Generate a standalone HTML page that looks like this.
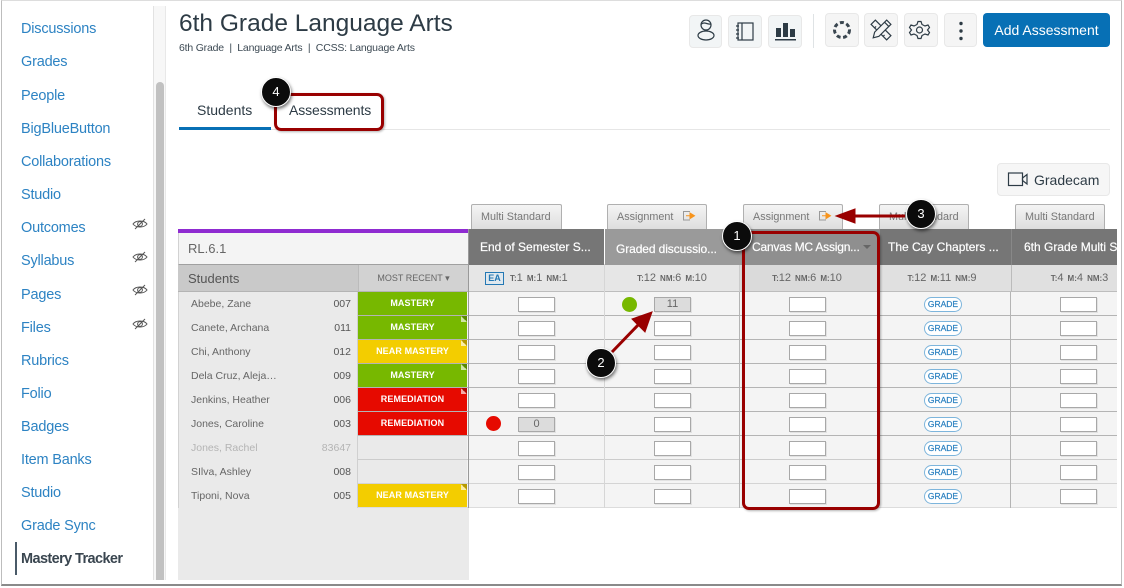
<!DOCTYPE html>
<html><head><meta charset="utf-8"><style>
html,body{margin:0;padding:0;background:#fff}
body{width:1124px;height:588px;position:relative;overflow:hidden;font-family:"Liberation Sans",sans-serif}
div,span,a{position:absolute;white-space:nowrap;box-sizing:border-box}
#win{left:1px;top:0;width:1121px;height:586px;border:1px solid #bdbdbd;border-bottom:2px solid #8a8a8a;border-top:1px solid #ddd;background:#fff}
.n{left:21px;font-size:14.5px;color:#2d83c3;line-height:20px;letter-spacing:-.2px}
.btn{background:#f5f5f5;border:1px solid #e8e8e8;border-radius:4px}
.tb{background:linear-gradient(#f4f4f4,#dedede);border:1px solid #b0b0b0;border-bottom:0;border-radius:2px 2px 0 0;top:204px;height:25px;font-size:10.8px;color:#777;line-height:24px;text-align:left;padding-left:9px}
.hd{top:229px;height:36px;background:#767676;color:#fff;font-size:12px;line-height:37px;padding-left:11px;overflow:hidden;-webkit-text-stroke:.2px #fff}
.sh{top:265px;height:27px;background:#e6e6e6;border-bottom:1px solid #bdbdbd;font-size:11px;color:#666;line-height:26px;text-align:center;word-spacing:1px}
.sh b{font-size:8px}
.r{left:178px;width:939px;height:24px;background:#f4f4f4;border-bottom:1px solid #b4b4b4}
.nm{left:0;width:180px;height:24px;background:#eaeaea;font-size:10.5px;color:#666;line-height:24px;padding-left:13px}
.id{left:132px;width:41px;text-align:right;font-size:10.5px;color:#555;line-height:24px}
.m{left:180px;width:109px;height:23px;color:#fff;font-size:9px;font-weight:bold;text-align:center;line-height:23px;letter-spacing:.1px}
.g{background:#77b800}.y{background:#f3cd00}.d{background:#e60a00}.e{background:#eaeaea}
.i{top:5px;width:37px;height:15px;background:#fff;border:1px solid #a8a8a8;box-shadow:1px 1px 0 #e2e2e2}
.c1{left:340px}.c2{left:476px}.c3{left:611px}.c5{left:882px}
.p{left:746px;top:5px;width:38px;height:15px;border:1px solid #7db5dc;border-radius:8px;background:#fff;color:#2a80c0;font-size:8.5px;line-height:13px;text-align:center;-webkit-text-stroke:.2px #2a80c0}
.tr{top:0;width:6px;height:6px;left:283px;background:linear-gradient(45deg,rgba(255,255,255,.65) 50%,rgba(0,0,0,.25) 50%)}
.v{width:1px;background:#c4c4c4}
.o{width:30px;height:30px;border-radius:50%;background:#0b0b0b;border:1px solid #fff;box-shadow:1px 2px 3px rgba(0,0,0,.55);color:#fff;font-size:13px;line-height:28px;text-align:center}
</style></head><body>
<div id="win"></div>

<!-- sidebar -->
<div style="left:153px;top:6px;width:13px;height:574px;background:#f7f7f7;border-left:1px solid #e2e2e2;border-right:1px solid #e8e8e8"></div>
<div style="left:156px;top:82px;width:8px;height:498px;background:#c1c1c1;border-radius:4px 4px 0 0"></div>
<a class="n" style="top:19px">Discussions</a>
<a class="n" style="top:52px">Grades</a>
<a class="n" style="top:86px">People</a>
<a class="n" style="top:119px">BigBlueButton</a>
<a class="n" style="top:152px">Collaborations</a>
<a class="n" style="top:185px">Studio</a>
<a class="n" style="top:218px">Outcomes</a>
<a class="n" style="top:251px">Syllabus</a>
<a class="n" style="top:285px">Pages</a>
<a class="n" style="top:318px">Files</a>
<a class="n" style="top:351px">Rubrics</a>
<a class="n" style="top:384px">Folio</a>
<a class="n" style="top:417px">Badges</a>
<a class="n" style="top:450px">Item Banks</a>
<a class="n" style="top:483px">Studio</a>
<a class="n" style="top:516px">Grade Sync</a>
<a class="n" style="top:549px;color:#3a4650;font-weight:bold;letter-spacing:-.6px">Mastery Tracker</a>
<div style="left:15px;top:542px;width:2px;height:33px;background:#4a5a68"></div>
<svg style="position:absolute;left:132px;top:217px" width="16" height="120" fill="none" stroke="#555" stroke-width="1">
<g><path d="M1 7C4 3 12 3 15 7C12 11 4 11 1 7Z"/><circle cx="8" cy="7" r="2.4"/><path d="M3 12L13 2"/></g>
<g transform="translate(0,33)"><path d="M1 7C4 3 12 3 15 7C12 11 4 11 1 7Z"/><circle cx="8" cy="7" r="2.4"/><path d="M3 12L13 2"/></g>
<g transform="translate(0,66)"><path d="M1 7C4 3 12 3 15 7C12 11 4 11 1 7Z"/><circle cx="8" cy="7" r="2.4"/><path d="M3 12L13 2"/></g>
<g transform="translate(0,100)"><path d="M1 7C4 3 12 3 15 7C12 11 4 11 1 7Z"/><circle cx="8" cy="7" r="2.4"/><path d="M3 12L13 2"/></g>
</svg>

<!-- header -->
<div style="left:179px;top:8px;font-size:24.5px;line-height:32px;color:#2d3b45">6th Grade Language Arts</div>
<div style="left:179px;top:41px;font-size:10.5px;line-height:14px;color:#3d4a54;letter-spacing:-.2px">6th Grade &nbsp;|&nbsp; Language Arts &nbsp;|&nbsp; CCSS: Language Arts</div>

<div class="btn" style="left:689px;top:15px;width:33px;height:33px;background:#f2f5f6"></div>
<div class="btn" style="left:728px;top:15px;width:34px;height:33px;background:#f2f5f6"></div>
<div class="btn" style="left:768px;top:15px;width:34px;height:33px;background:#f2f5f6"></div>
<div style="left:813px;top:14px;width:1px;height:34px;background:#dfe3e5"></div>
<div class="btn" style="left:825px;top:13px;width:34px;height:34px"></div>
<div class="btn" style="left:864px;top:13px;width:34px;height:34px"></div>
<div class="btn" style="left:904px;top:13px;width:34px;height:34px"></div>
<div class="btn" style="left:944px;top:13px;width:33px;height:34px"></div>
<svg style="position:absolute;left:689px;top:13px" width="290" height="36" fill="none" stroke="#2d3b45" stroke-width="1.2">
<!-- person -->
<ellipse cx="17" cy="22.5" rx="8" ry="4.5"/><circle cx="17" cy="12" r="5"/><path d="M12 11.5C15 8 19 12 22 11"/>
<!-- notebook -->
<rect x="49" y="10" width="15" height="17"/><path d="M53 10V27M47 13h3M47 17h3M47 21h3M47 25h3"/>
<!-- chart -->
<g fill="#2d3b45" stroke="none"><rect x="87" y="15" width="5" height="9"/><rect x="94" y="10" width="5" height="14"/><rect x="101" y="16" width="5" height="8"/><rect x="86" y="26" width="21" height="1.5"/></g>
<!-- canvas dots -->
<circle cx="153" cy="17" r="7.5" stroke="#3a4650" stroke-width="3" stroke-dasharray="4 2.6"/>
<!-- pencil ruler -->
<g stroke-width="1.2"><g transform="rotate(-45 192 17)"><rect x="189" y="6" width="6" height="22"/><path d="M189 11h2M189 15h2M189 19h2M189 23h2"/></g><g transform="rotate(45 192 17)" fill="#f5f5f5"><path d="M189 6h6v17l-3 5l-3-5Z"/><path d="M189 9h6"/></g></g>
<!-- gear -->
<path d="M229 8.500L232 8.500L233 11.500L236 13L239 12L240.500 14.500L238.500 17L240.500 19.500L239 22L236 21L233 22.500L232 25.500L229 25.500L228 22.500L225 21L222 22L220.500 19.500L222.500 17L220.500 14.500L222 12L225 13L228 11.500Z"/><circle cx="230.500" cy="17" r="3"/>
<!-- kebab -->
<g fill="#2d3b45" stroke="none"><circle cx="272" cy="10.500" r="1.700"/><circle cx="272" cy="18" r="1.700"/><circle cx="272" cy="25.500" r="1.700"/></g>
</svg>
<div style="left:983px;top:13px;width:127px;height:34px;background:#0770b5;border-radius:4px;color:#fff;font-size:14px;line-height:34px;text-align:center">Add Assessment</div>

<!-- tabs -->
<div style="left:179px;top:129px;width:931px;height:1px;background:#e6e6e6"></div>
<div style="left:179px;top:127px;width:92px;height:3px;background:#0770b5"></div>
<div style="left:197px;top:100px;font-size:14px;line-height:20px;color:#2d3b45">Students</div>
<div style="left:289px;top:100px;font-size:14px;line-height:20px;color:#2d3b45;letter-spacing:-.1px">Assessments</div>

<div class="btn" style="left:997px;top:163px;width:113px;height:33px;background:#f6f6f6"></div>
<svg style="position:absolute;left:1007px;top:171px" width="22" height="16" fill="none" stroke="#2d3b45" stroke-width="1.2"><rect x="1.500" y="2" width="14" height="12.500"/><path d="M20 3.500V13L15.500 9.500V7Z"/></svg>
<div style="left:1034px;top:170px;font-size:14px;line-height:20px;color:#2d3b45">Gradecam</div>

<!-- tab buttons -->
<div class="tb" style="left:471px;width:91px">Multi Standard</div>
<div class="tb" style="left:607px;width:100px">Assignment</div>
<div class="tb" style="left:743px;width:100px">Assignment</div>
<div class="tb" style="left:879px;width:90px">Multi Standard</div>
<div class="tb" style="left:1015px;width:90px">Multi Standard</div>
<svg style="position:absolute;left:682px;top:209px" width="14" height="14" fill="none"><path d="M8 2.500H1.500V11H8" stroke="#999"/><path d="M4 6.800H8V4L12.500 6.800L8 9.600V6.800" fill="#f7941d" stroke="#f7941d"/></svg>
<svg style="position:absolute;left:818px;top:209px" width="14" height="14" fill="none"><path d="M8 2.500H1.500V11H8" stroke="#999"/><path d="M4 6.800H8V4L12.500 6.800L8 9.600V6.800" fill="#f7941d" stroke="#f7941d"/></svg>

<!-- rows -->
<div class="r" style="top:292px"><div class="nm">Abebe, Zane</div><div class="id">007</div><div class="m g">MASTERY</div><div class="i c1"></div><div class="i c2" style="background:#dcdcdc;color:#666;font-size:11px;line-height:13px;text-align:center">11</div><div class="i c3"></div><div class="p">GRADE</div><div class="i c5"></div></div>
<div class="r" style="top:316px"><div class="nm">Canete, Archana</div><div class="id">011</div><div class="m g">MASTERY</div><div class="tr"></div><div class="i c1"></div><div class="i c2"></div><div class="i c3"></div><div class="p">GRADE</div><div class="i c5"></div></div>
<div class="r" style="top:340px"><div class="nm">Chi, Anthony</div><div class="id">012</div><div class="m y">NEAR MASTERY</div><div class="tr"></div><div class="i c1"></div><div class="i c2"></div><div class="i c3"></div><div class="p">GRADE</div><div class="i c5"></div></div>
<div class="r" style="top:364px"><div class="nm">Dela Cruz, Aleja…</div><div class="id">009</div><div class="m g">MASTERY</div><div class="tr"></div><div class="i c1"></div><div class="i c2"></div><div class="i c3"></div><div class="p">GRADE</div><div class="i c5"></div></div>
<div class="r" style="top:388px"><div class="nm">Jenkins, Heather</div><div class="id">006</div><div class="m d">REMEDIATION</div><div class="tr"></div><div class="i c1"></div><div class="i c2"></div><div class="i c3"></div><div class="p">GRADE</div><div class="i c5"></div></div>
<div class="r" style="top:412px"><div class="nm">Jones, Caroline</div><div class="id">003</div><div class="m d">REMEDIATION</div><div class="i c1" style="background:#dcdcdc;color:#666;font-size:11px;line-height:13px;text-align:center">0</div><div class="i c2"></div><div class="i c3"></div><div class="p">GRADE</div><div class="i c5"></div></div>
<div class="r" style="top:436px;border-color:#ccc"><div class="nm" style="color:#b4b4b4">Jones, Rachel</div><div class="id" style="color:#b4b4b4">83647</div><div class="m e"></div><div class="i c1"></div><div class="i c2"></div><div class="i c3"></div><div class="p">GRADE</div><div class="i c5"></div></div>
<div class="r" style="top:460px;border-color:#d4d4d4"><div class="nm">SIlva, Ashley</div><div class="id">008</div><div class="m e"></div><div class="i c1"></div><div class="i c2"></div><div class="i c3"></div><div class="p">GRADE</div><div class="i c5"></div></div>
<div class="r" style="top:484px;border-color:#dcdcdc"><div class="nm">Tiponi, Nova</div><div class="id">005</div><div class="m y">NEAR MASTERY</div><div class="tr"></div><div class="i c1"></div><div class="i c2"></div><div class="i c3"></div><div class="p">GRADE</div><div class="i c5"></div></div>

<div style="left:178px;top:508px;width:291px;height:72px;background:#eaeaea"></div>
<div class="v" style="left:178px;top:265px;height:243px;background:#d2d2d2"></div>
<div class="v" style="left:357px;top:292px;height:216px;background:#d0d0d0"></div>
<div class="v" style="left:468px;top:229px;height:279px;background:#999"></div>
<div class="v" style="left:604px;top:264px;height:244px;background:#d6d6d6"></div>
<div class="v" style="left:739px;top:292px;height:216px;background:#b4b4b4"></div>
<div class="v" style="left:1010px;top:264px;height:244px;background:#b4b4b4"></div>

<!-- left head -->
<div style="left:178px;top:229px;width:290px;height:4px;background:#8f2bd1"></div>
<div style="left:178px;top:233px;width:290px;height:32px;background:#f4f4f4;border-bottom:1px solid #a0a0a0;border-left:1px solid #d2d2d2;color:#666;font-size:13px;line-height:32px;padding-left:9px">RL.6.1</div>
<div style="left:178px;top:265px;width:180px;height:27px;background:#c9c9c9;border-bottom:1px solid #b4b4b4;color:#555;font-size:13px;line-height:27px;padding-left:10px">Students</div>
<div style="left:358px;top:265px;width:110px;height:27px;background:#d2d2d2;border-left:1px solid #bbb;border-bottom:1px solid #b4b4b4;color:#666;font-size:9px;line-height:27px;text-align:center">MOST RECENT ▾</div>

<!-- grid head -->
<div class="hd" style="left:469px;width:135px">End of Semester S...</div>
<div class="hd" style="left:605px;width:138px;background:#9a9a9a;line-height:40px;letter-spacing:-.1px">Graded discussio...</div>
<div class="hd" style="left:743px;width:137px;background:#8f8f8f;padding-left:9px;letter-spacing:-.2px">Canvas MC Assign...<span style="left:120px;top:16px;width:0;height:0;border:4px solid transparent;border-top:4px solid #666;border-bottom:0"></span></div>
<div class="hd" style="left:880px;width:131px;padding-left:8px">The Cay Chapters ...</div>
<div class="hd" style="left:1011px;width:106px;padding-left:12px;border-left:1px solid #888">6th Grade Multi S</div>

<div class="sh" style="left:469px;width:135px;padding-left:3px"><span style="left:16px;top:7px;width:19px;height:13px;border:1px solid #2478b4;background:#dfe8ee;color:#2478b4;font-size:9px;line-height:11px;font-weight:bold;text-align:center;word-spacing:0">EA</span><span style="left:41px;top:0"><b>T:</b>1 <b>M:</b>1 <b>NM:</b>1</span></div>
<div class="sh" style="left:605px;width:135px;border-right:1px solid #ccc"><b>T:</b>12 <b>NM:</b>6 <b>M:</b>10</div>
<div class="sh" style="left:740px;width:140px;background:#dadada;padding-right:6px"><b>T:</b>12 <b>NM:</b>6 <b>M:</b>10</div>
<div class="sh" style="left:880px;width:131px;background:#e0e0e0;padding-right:7px"><b>T:</b>12 <b>M:</b>11 <b>NM:</b>9</div>
<div class="sh" style="left:1011px;width:106px;background:#e0e0e0;border-left:1px solid #bbb;padding-left:30px"><b>T:</b>4 <b>M:</b>4 <b>NM:</b>3</div>

<!-- dots -->
<div style="left:622px;top:297px;width:15px;height:15px;border-radius:50%;background:#77b800"></div>
<div style="left:486px;top:416px;width:15px;height:15px;border-radius:50%;background:#e60a00"></div>

<!-- callouts -->
<div style="left:742px;top:231px;width:138px;height:279px;border:3px solid #990000;border-radius:7px;box-shadow:1px 1px 2px rgba(0,0,0,.3)"></div>
<div style="left:274px;top:93px;width:110px;height:38px;border:3px solid #990000;border-radius:7px;box-shadow:1px 1px 2px rgba(0,0,0,.3)"></div>
<svg style="position:absolute;left:0;top:0" width="1124" height="588"><g fill="#990000" stroke="#990000">
<path d="M612 352L640 323" stroke-width="3" fill="none"/><path d="M652 312L645 332L632 319Z" stroke-width="1"/>
<path d="M905 216H850" stroke-width="3" fill="none"/><path d="M836 216L855 209V223Z" stroke-width="1"/></g></svg>
<div class="o" style="left:261px;top:77px">4</div>
<div class="o" style="left:722px;top:221px">1</div>
<div class="o" style="left:586px;top:348px">2</div>
<div class="o" style="left:906px;top:199px">3</div>
</body></html>
